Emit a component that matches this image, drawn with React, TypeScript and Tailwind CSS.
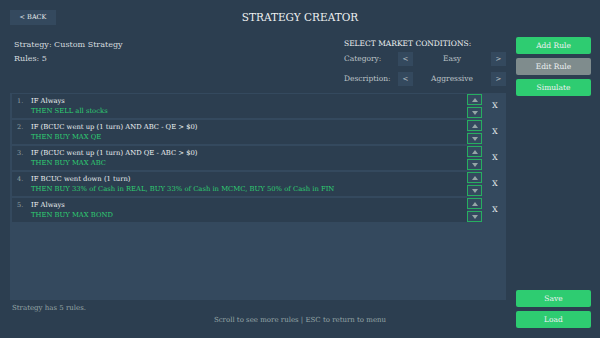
import React from 'react';

const rules = [
  { cond: 'IF Always', action: 'THEN SELL all stocks' },
  { cond: 'IF (BCUC went up (1 turn) AND ABC - QE > $0)', action: 'THEN BUY MAX QE' },
  { cond: 'IF (BCUC went up (1 turn) AND QE - ABC > $0)', action: 'THEN BUY MAX ABC' },
  {
    cond: 'IF BCUC went down (1 turn)',
    action: 'THEN BUY 33% of Cash in REAL, BUY 33% of Cash in MCMC, BUY 50% of Cash in FIN',
  },
  { cond: 'IF Always', action: 'THEN BUY MAX BOND' },
];

function Arrow({ dir }: { dir: 'up' | 'down' }) {
  return (
    <button className="w-[15px] h-[11px] border border-[#27ae60] flex items-center justify-center">
      <svg width="6" height="4" viewBox="0 0 6 4">
        {dir === 'up' ? (
          <polygon points="3,0 6,4 0,4" fill="#95a5a6" />
        ) : (
          <polygon points="0,0 6,0 3,4" fill="#95a5a6" />
        )}
      </svg>
    </button>
  );
}

function Selector({ label, value }: { label: string; value: string }) {
  return (
    <div className="flex items-center h-[14px]">
      <span className="w-[54px] text-[7.5px] text-[#bdc3c7]">{label}</span>
      <button className="w-[15px] h-[14px] bg-[#34495e] text-[7px] text-[#bdc3c7] flex items-center justify-center">&lt;</button>
      <span className="flex-1 text-center text-[7.5px] text-[#bdc3c7]">{value}</span>
      <button className="w-[15px] h-[14px] bg-[#34495e] text-[7px] text-[#bdc3c7] flex items-center justify-center">&gt;</button>
    </div>
  );
}

function SideButton({ label, gray }: { label: string; gray?: boolean }) {
  return (
    <button
      className={`w-[75px] h-[17px] rounded-[2px] text-[7.5px] text-[#ecf0f1] flex items-center justify-center ${
        gray ? 'bg-[#7f8c8d]' : 'bg-[#2ecc71]'
      }`}
    >
      {label}
    </button>
  );
}

export default function App() {
  return (
    <div
      className="w-[600px] h-[338px] bg-[#2c3e50] overflow-hidden flex flex-col"
      style={{ fontFamily: '"DejaVu Serif", "Liberation Serif", serif' }}
    >
      <div className="grid grid-cols-[1fr_auto_1fr] items-center px-[10px] mt-[10px] h-[15px]">
        <button className="w-[46px] h-[15px] bg-[#34495e] text-[6.5px] text-[#ecf0f1] flex items-center justify-center">
          &lt; BACK
        </button>
        <h1 className="text-[10.5px] text-[#ecf0f1] leading-none">STRATEGY CREATOR</h1>
        <div />
      </div>

      <div className="flex gap-[10px] px-[10px] mt-[12px] flex-1">
        <div className="w-[496px] flex flex-col">
          <div className="flex justify-between h-[56px]">
            <div className="pl-[4px] pt-[1px] text-[8px] text-[#d5dbdf] leading-[14px]">
              <div>Strategy: Custom Strategy</div>
              <div>Rules: 5</div>
            </div>
            <div className="w-[162px] flex flex-col">
              <div className="text-[7.5px] text-[#ecf0f1] leading-[12px] pt-[1px] h-[15px]">
                SELECT MARKET CONDITIONS:
              </div>
              <div className="flex flex-col gap-[6px]">
                <Selector label="Category:" value="Easy" />
                <Selector label="Description:" value="Aggressive" />
              </div>
            </div>
          </div>

          <div className="h-[207px] bg-[#34495e] pt-[1px] pl-[2px] flex flex-col gap-[2px]">
            {rules.map((r, i) => (
              <div key={i} className="flex h-[24px]">
                <div className="w-[455px] bg-[#2c3e50] flex pl-[5px] pt-[2px]">
                  <span className="w-[14px] text-[6.5px] text-[#95a5a6] leading-[10px]">{i + 1}.</span>
                  <div className="flex flex-col">
                    <span className="text-[6.8px] text-[#ecf0f1] leading-[10px] whitespace-nowrap">{r.cond}</span>
                    <span className="text-[6.8px] text-[#2ecc71] leading-[10px] whitespace-nowrap">{r.action}</span>
                  </div>
                </div>
                <div className="flex flex-col gap-[2px]">
                  <Arrow dir="up" />
                  <Arrow dir="down" />
                </div>
                <div className="flex-1 flex items-center justify-center pl-[2px] text-[7.5px] text-[#ecf0f1]">X</div>
              </div>
            ))}
          </div>

          <div className="pl-[2px] mt-[3px] text-[7px] text-[#95a5a6] leading-[10px]">Strategy has 5 rules.</div>
          <div className="w-[580px] text-center mt-[2px] text-[7px] text-[#95a5a6] leading-[10px]">
            Scroll to see more rules | ESC to return to menu
          </div>
        </div>

        <div className="w-[75px] flex flex-col justify-between pb-[10px]">
          <div className="flex flex-col gap-[4px]">
            <SideButton label="Add Rule" />
            <SideButton label="Edit Rule" gray />
            <SideButton label="Simulate" />
          </div>
          <div className="flex flex-col gap-[4px]">
            <SideButton label="Save" />
            <SideButton label="Load" />
          </div>
        </div>
      </div>
    </div>
  );
}
